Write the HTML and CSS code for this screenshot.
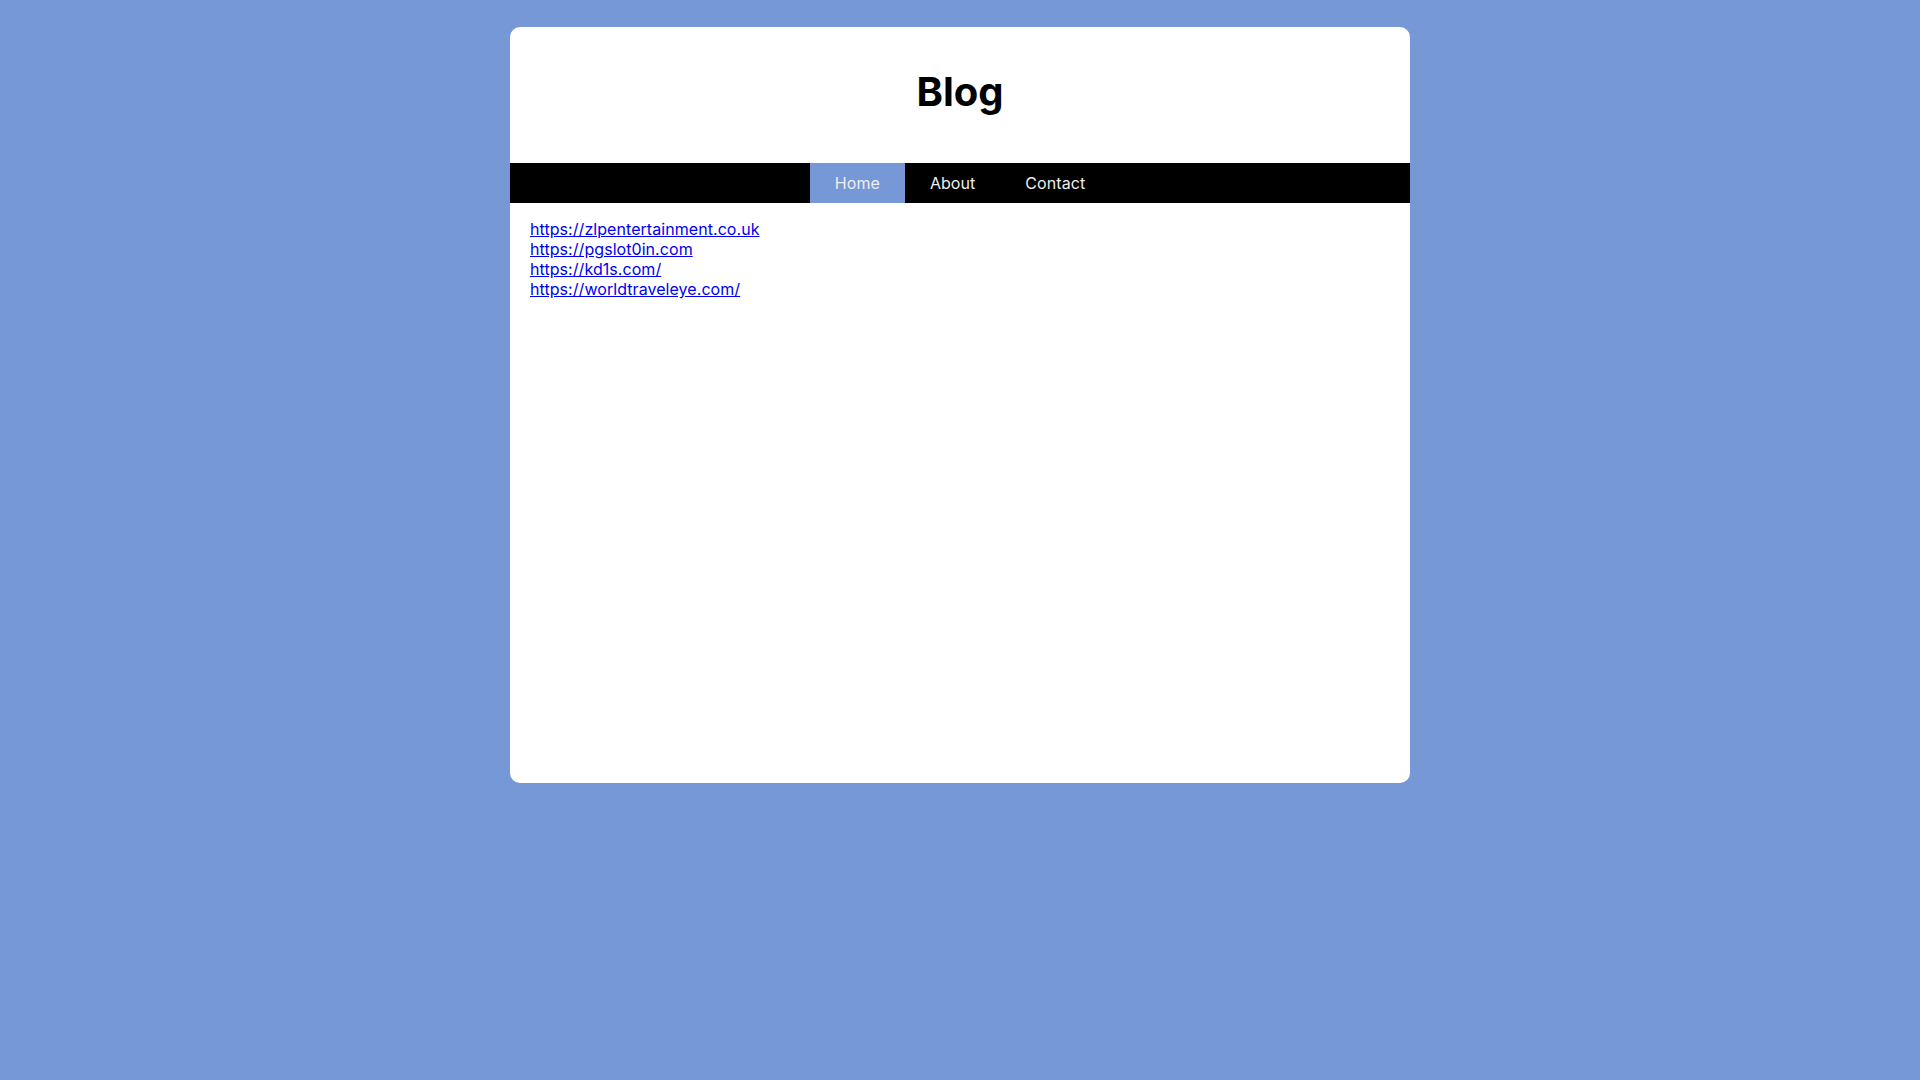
FILE: index.html
```html
<!DOCTYPE html>
<html lang="en">
<head>
<meta charset="utf-8">
<title>Blog</title>
<link rel="stylesheet" href="styles.css">
</head>
<body>
<div class="card">
  <header class="header">
    <h1 class="title">Blog</h1>
  </header>
  <nav class="nav">
    <a class="nav-item active" href="#">Home</a>
    <a class="nav-item" href="#">About</a>
    <a class="nav-item" href="#">Contact</a>
  </nav>
  <main class="content">
    <a class="link" href="#">https://zlpentertainment.co.uk</a>
    <a class="link" href="#">https://pgslot0in.com</a>
    <a class="link" href="#">https://kd1s.com/</a>
    <a class="link" href="#">https://worldtraveleye.com/</a>
  </main>
</div>
</body>
</html>
```

FILE: styles.css
```css
html, body {
  margin: 0;
  padding: 0;
}
body {
  background: #7698d6;
  font-family: Inter, "Liberation Sans", sans-serif;
  padding-top: 27px;
  letter-spacing: 0.06px;
}
.card {
  width: 900px;
  margin: 0 auto;
  background: #ffffff;
  border-radius: 10px;
  overflow: hidden;
  height: 756px;
  display: flex;
  flex-direction: column;
}
.header {
  height: 136px;
  display: flex;
  justify-content: center;
  padding-top: 41px;
  box-sizing: border-box;
}
.title {
  margin: 0;
  font-size: 40px;
  font-weight: 700;
  color: #000;
  line-height: 48px;
  letter-spacing: 0;
}
.nav {
  background: #000;
  height: 40px;
  display: flex;
  justify-content: center;
}
.nav-item {
  display: flex;
  align-items: center;
  padding: 0 25px;
  color: #eeeeee;
  text-decoration: none;
  font-size: 16px;
}
.nav-item.active {
  background: #7698d6;
}
.content {
  padding: 16px 20px;
  display: flex;
  flex-direction: column;
  align-items: flex-start;
}
.link {
  color: #0000ee;
  font-size: 16px;
  line-height: 20px;
}
```
